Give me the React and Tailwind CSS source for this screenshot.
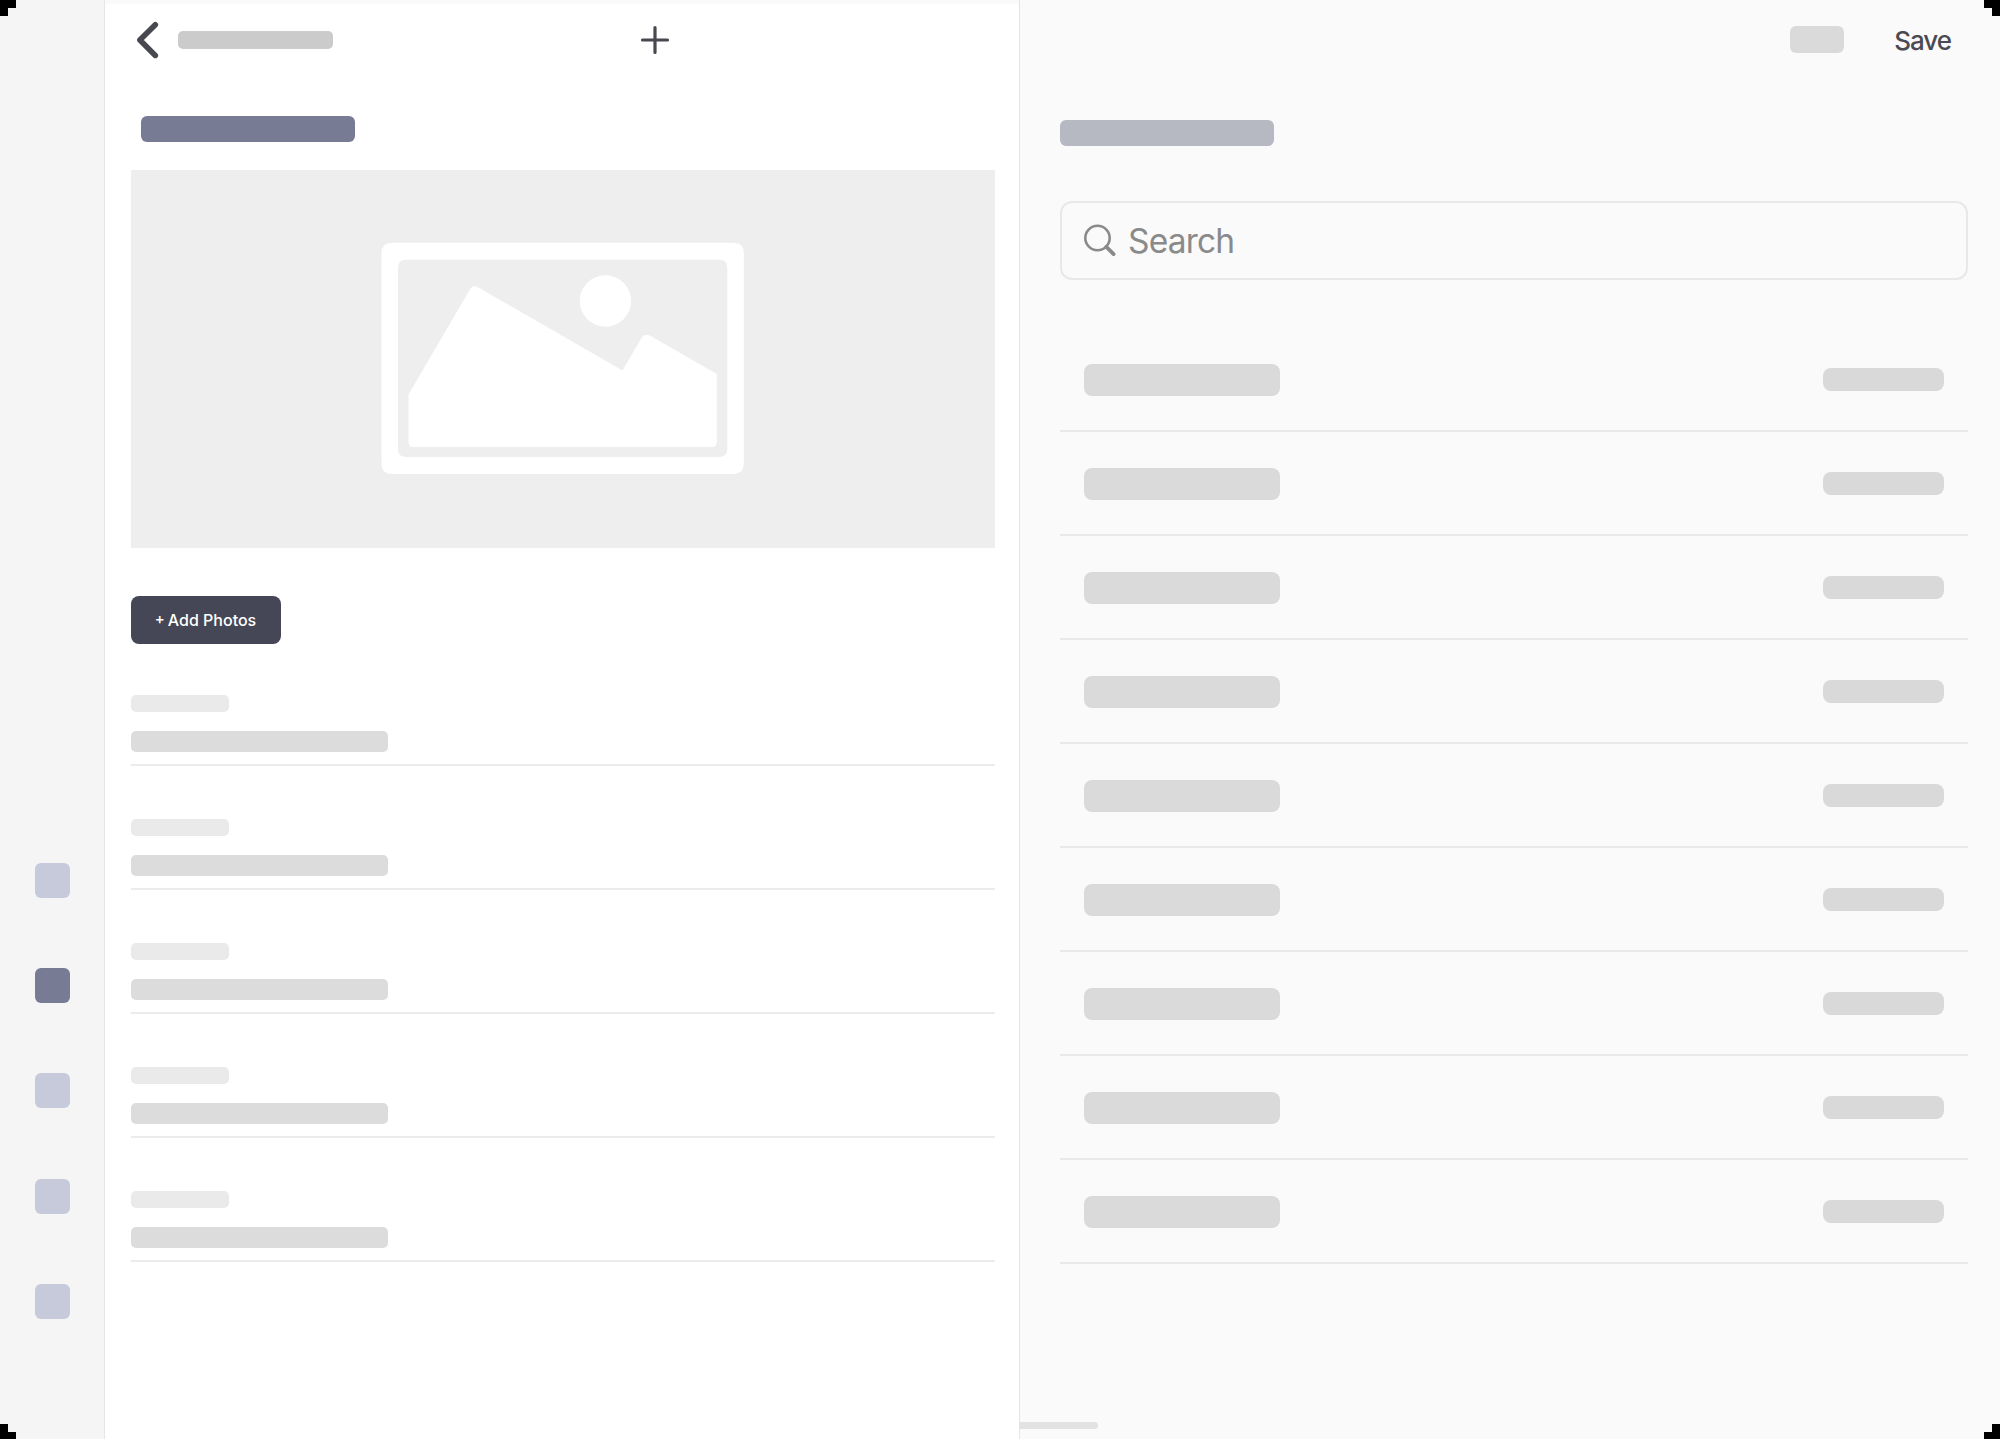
import React from "react";

const NAV = [false, true, false, false, false];

function Sidebar() {
  return (
    <nav className="flex h-full w-[105px] shrink-0 flex-col border-r border-[#e5e6e6] bg-[#f5f5f5] pl-[35px] pt-[862.5px]">
      <div className="flex flex-col gap-[70.4px]">
        {NAV.map((active, i) => (
          <div
            key={i}
            className={
              active
                ? "h-[35px] w-[35px] rounded-[6px] bg-[#777b94]"
                : "h-[35px] w-[35px] rounded-[6px] bg-[#c7cada]"
            }
          />
        ))}
      </div>
    </nav>
  );
}

function ImagePlaceholder() {
  return (
    <div className="mt-[27.5px] flex h-[378px] w-[864px] items-start bg-[#eeeeee] pl-[250.5px] pt-[72px]">
      <svg width="364" height="234" viewBox="381 242 364 234" fill="#fff">
        <path
          fillRule="evenodd"
          d="M392 242.7H733.5Q743.8 242.7 743.8 253V463.5Q743.8 474 733.5 474H392Q381.5 474 381.5 463.5V253Q381.5 242.7 392 242.7ZM406 259.7Q398 259.7 398 267.7V449Q398 457 406 457H719.3Q727.3 457 727.3 449V267.7Q727.3 259.7 719.3 259.7Z"
        />
        <circle cx="605.4" cy="301" r="25.7" />
        <path d="M408.5 394.5L470.5 288.5Q473.5 284.5 478.5 287.5L622.5 370.5L641.5 338Q645.5 332.5 651.5 336.5L716.8 374V442Q716.8 447 711.8 447H413.5Q408.5 447 408.5 442Z" />
      </svg>
    </div>
  );
}

function Field() {
  return (
    <div className="mb-[53.1px] flex h-[71px] w-[864px] flex-col border-b-2 border-[#ececec]">
      <div className="h-[17px] w-[98px] rounded-[5px] bg-[#eaeaea]" />
      <div className="mt-[19.4px] h-[21px] w-[257px] rounded-[5px] bg-[#dcdcdc]" />
    </div>
  );
}

function Editor() {
  return (
    <main className="flex h-full w-[915px] shrink-0 flex-col border-r border-[#e5e5e5] bg-white pl-[25.5px]">
      <div className="-ml-[25.5px] h-1 w-[914px] shrink-0 bg-[#fafafa]" />
      <header className="flex h-[71px] items-center">
        <svg className="ml-[4.5px]" width="26" height="40" viewBox="0 0 26 40" fill="none" stroke="#474850" strokeWidth="5.6" strokeLinecap="round" strokeLinejoin="round">
          <path d="M20.3 4.7L4.9 20L20.3 35.4" />
        </svg>
        <div className="ml-[17px] h-[18px] w-[155px] rounded-[5px] bg-[#cbcbcb]" />
        <svg className="ml-[307px]" width="30" height="30" viewBox="0 0 30 30" fill="none" stroke="#474850" strokeWidth="3.2" strokeLinecap="round">
          <path d="M15 2.5V27.5M2.5 15H27.5" />
        </svg>
      </header>
      <div className="ml-[10.5px] mt-[41px] h-[26px] w-[214px] rounded-[6px] bg-[#777b94]" />
      <ImagePlaceholder />
      <button className="mt-[48px] flex h-12 w-[150px] shrink-0 items-center justify-center gap-[3px] rounded-[8px] bg-[#454756] font-['Inter',sans-serif] text-[16px] font-medium tracking-[0px] whitespace-nowrap text-white">
        <span className="text-[15px]">+</span>
        <span>Add Photos</span>
      </button>
      <section className="mt-[51px] flex flex-col">
        {[0, 1, 2, 3, 4].map((i) => (
          <Field key={i} />
        ))}
      </section>
    </main>
  );
}

function Row() {
  return (
    <div className="flex h-[104px] items-center justify-between border-b-2 border-[#e9e9e9] pl-6 pr-6 pt-[1.5px]">
      <div className="h-[31.5px] w-[196px] rounded-[8px] bg-[#dadada]" />
      <div className="h-[23px] w-[121px] rounded-[8px] bg-[#d9d9d9]" />
    </div>
  );
}

function Details() {
  return (
    <aside className="flex min-w-0 flex-1 flex-col bg-[#fafafa] pl-10 pr-8">
      <header className="flex h-[79px] shrink-0 items-center justify-end pr-[17px] font-['Inter',sans-serif]">
        <div className="mr-[50px] h-[27px] w-[54px] rounded-[6px] bg-[#dadada]" />
        <span className="pt-[2px] text-[26px] font-medium leading-8 tracking-[-1px] text-[#4a4b52]">Save</span>
      </header>
      <div className="mt-[41px] h-[26px] w-[214px] shrink-0 rounded-[6px] bg-[#b6b8c2]" />
      <div className="mt-[54.5px] flex h-[79.5px] shrink-0 items-center rounded-[12px] border-2 border-[#e8e8e8] pt-[1.5px] font-['Inter',sans-serif]">
        <svg className="ml-[20px]" width="36" height="36" viewBox="0 0 36 36" fill="none" stroke="#8a8a8a" strokeLinecap="round">
          <circle cx="15.5" cy="15" r="12.2" strokeWidth="2.6" />
          <path d="M24.3 23.8L31.6 31.1" strokeWidth="3.8" />
        </svg>
        <span className="ml-[10px] text-[33.5px] tracking-[-0.8px] text-[#8a8a8a]">Search</span>
      </div>
      <div className="mt-[48px] flex flex-col">
        {[0, 1, 2, 3, 4, 5, 6, 7, 8].map((i) => (
          <Row key={i} />
        ))}
      </div>
      <div className="-ml-10 mt-[158px] h-[7px] w-[78px] shrink-0 rounded-r-full bg-[#e2e2e2]" />
    </aside>
  );
}

function Corner({ className }) {
  return (
    <svg className={className} width="16" height="16" viewBox="0 0 16 16" shapeRendering="crispEdges">
      <path d="M0 0H16V8H8V16H0Z" fill="#000" />
    </svg>
  );
}

export default function App() {
  return (
    <div className="relative flex h-[1439px] w-[2000px] overflow-hidden bg-[#fafafa]">
      <Sidebar />
      <Editor />
      <Details />
      <Corner className="absolute left-0 top-0" />
      <Corner className="absolute right-0 top-0 -scale-x-100" />
      <Corner className="absolute -bottom-px left-0 -scale-y-100" />
      <Corner className="absolute -bottom-px right-0 -scale-100" />
    </div>
  );
}
